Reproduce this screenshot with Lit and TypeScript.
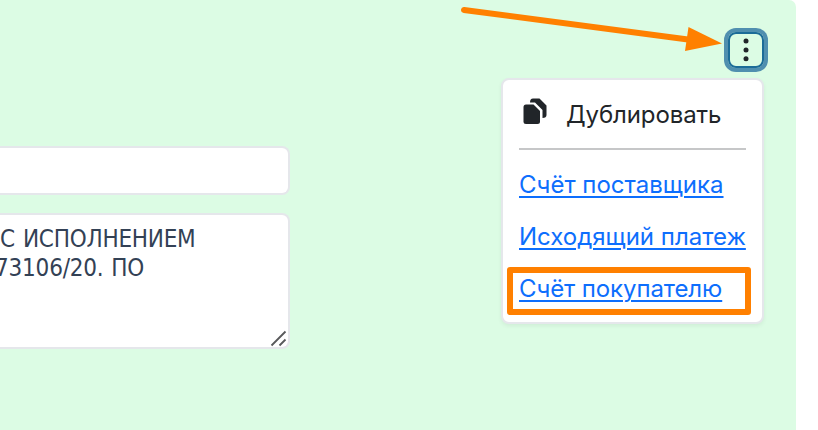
import { LitElement, html, css } from "lit";
import { customElement } from "lit/decorators.js";

@customElement("actions-menu")
class ActionsMenu extends LitElement {
  static styles = css`
    :host {
      display: block;
      box-sizing: border-box;
      width: 263px;
      height: 246px;
      padding: 16px 16px 0;
      border: 2px solid #e5e7eb;
      border-radius: 8px;
      background: #fff;
      box-shadow: 0 2px 4px rgba(0, 0, 0, 0.06);
      font: 24px/36px Inter, "Liberation Sans", sans-serif;
      color: #212529;
    }
    .head {
      display: flex;
      height: 52px;
      border-bottom: 2px solid #c6c7c8;
    }
    .copy {
      flex: none;
      width: 24px;
      height: 27px;
      margin: 2px 19px 0 4px;
    }
    .title {
      padding-top: 1px;
      letter-spacing: -0.1px;
    }
    .links {
      display: flex;
      flex-direction: column;
      align-items: flex-start;
      gap: 16px;
      padding-top: 17px;
    }
    a {
      position: relative;
      white-space: nowrap;
      color: #0d6efd;
      text-decoration: underline;
      text-decoration-thickness: 2px;
      text-underline-offset: 3px;
    }
    .tight {
      letter-spacing: -0.1px;
    }
    .mark {
      position: absolute;
      left: -12px;
      top: -4px;
      width: 232px;
      height: 36px;
      border: 6px solid #ff8000;
      border-radius: 3px;
    }
  `;
  render() {
    return html`
      <div class="head">
        <svg class="copy" viewBox="0 0 24 27" fill="#212529">
          <path d="M3 6.5H10.5L17 13V23.5Q17 26 14.5 26H3Q.5 26 .5 23.5V9Q.5 6.5 3 6.5Z" />
          <path d="M7 4.500Q7 .5 10 .5H16.500L23.500 7.500V17Q23.500 20 19.500 20V12L12 4.500Z" />
        </svg>
        <span class="title">Дублировать</span>
      </div>
      <div class="links">
        <a>Счёт поставщика</a>
        <a>Исходящий платеж</a>
        <a class="tight">Счёт покупателю<span class="mark"></span></a>
      </div>
    `;
  }
}

@customElement("app-root")
class AppRoot extends LitElement {
  static styles = css`
    :host {
      display: block;
      position: relative;
      height: 430px;
      overflow: hidden;
      background: #fff;
    }
    .panel {
      display: flex;
      justify-content: space-between;
      box-sizing: border-box;
      width: 796px;
      height: 430px;
      padding-right: 32px;
      border-radius: 0 7px 0 0;
      background: #dcfce4;
    }
    .fields {
      display: flex;
      flex-direction: column;
      gap: 18px;
      width: 290px;
      padding-top: 146px;
    }
    .input,
    .area {
      box-sizing: border-box;
      border: 2px solid #e5e7eb;
      border-left: 0;
      border-radius: 0 8px 8px 0;
      background: #fff;
    }
    .input {
      height: 49px;
    }
    .area {
      position: relative;
      height: 136px;
      padding-top: 10px;
      font: 24px/29px "DejaVu Sans Condensed", "DejaVu Sans", sans-serif;
      font-stretch: condensed;
      letter-spacing: -0.25px;
      color: #334155;
      white-space: nowrap;
    }
    .line {
      display: block;
    }
    .first {
      word-spacing: 1.5px;
    }
    .second {
      margin-left: -5px;
      letter-spacing: -0.2px;
      word-spacing: 1px;
    }
    .grip {
      position: absolute;
      right: 1px;
      bottom: 0;
      width: 17px;
      height: 17px;
    }
    .side {
      display: flex;
      flex-direction: column;
      align-items: flex-end;
      gap: 10px;
      padding-top: 32px;
    }
    .more {
      display: flex;
      align-items: center;
      justify-content: center;
      box-sizing: border-box;
      width: 36px;
      height: 36px;
      border: 2px solid #1c6c98;
      border-radius: 8px;
      box-shadow: 0 0 0 4px #508faf;
    }
    .arrow {
      position: absolute;
      left: 450px;
      top: 0;
    }
  `;
  render() {
    return html`
      <div class="panel">
        <div class="fields">
          <div class="input"></div>
          <div class="area">
            <span class="line first">С ИСПОЛНЕНИЕМ</span>
            <span class="line second">73106/20. ПО</span>
            <svg class="grip" viewBox="0 0 17 17" stroke="#58595b" stroke-width="1.8">
              <path d="M1.500 15.500L15.500 1.500M9.500 15.500L15.500 9.500" />
            </svg>
          </div>
        </div>
        <div class="side">
          <div class="more">
            <svg width="8" height="26" viewBox="0 0 8 26" fill="#212529">
              <circle cx="4" cy="4" r="2.500" />
              <circle cx="4" cy="13" r="2.500" />
              <circle cx="4" cy="21.800" r="2.500" />
            </svg>
          </div>
          <actions-menu></actions-menu>
        </div>
      </div>
      <svg class="arrow" width="280" height="60" viewBox="0 0 280 60">
        <path d="M14 10L238 39.500" stroke="#ff8000" stroke-width="6" stroke-linecap="round" />
        <path d="M238.500 27L272 43.500L235 51Z" fill="#ff8000" />
      </svg>
    `;
  }
}
